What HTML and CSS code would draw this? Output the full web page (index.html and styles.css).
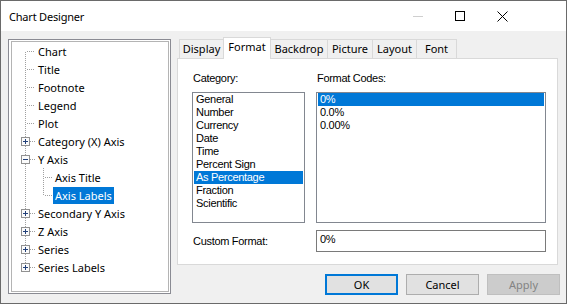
FILE: index.html
```html
<!DOCTYPE html>
<html>
<head>
<meta charset="utf-8">
<title>Chart Designer</title>
<link rel="stylesheet" href="styles.css">
</head>
<body>
<div class="window">
  <div class="titlebar">
    <span class="title">Chart Designer</span>
    <div class="controls">
      <span class="ctl"><svg width="10" height="1"><rect width="10" height="1" fill="#cfcfcf"/></svg></span>
      <span class="ctl"><svg width="10" height="10"><rect x="0.5" y="0.5" width="9" height="9" fill="none" stroke="#000"/></svg></span>
      <span class="ctl"><svg width="11" height="11"><path d="M0.5 0.5L10.5 10.5M10.5 0.5L0.5 10.5" stroke="#000" fill="none"/></svg></span>
    </div>
  </div>
  <div class="main">
    <div class="tree">
      <div class="tree-inner">
        <div class="row"><svg class="gut" width="24" height="18"><line x1="13.5" y1="10" x2="13.5" y2="18" class="dot"/><line x1="15" y1="9.5" x2="23" y2="9.5" class="dot"/></svg><span class="label">Chart</span></div>
        <div class="row"><svg class="gut" width="24" height="18"><line x1="13.5" y1="0" x2="13.5" y2="18" class="dot"/><line x1="15" y1="9.5" x2="23" y2="9.5" class="dot"/></svg><span class="label">Title</span></div>
        <div class="row"><svg class="gut" width="24" height="18"><line x1="13.5" y1="0" x2="13.5" y2="18" class="dot"/><line x1="15" y1="9.5" x2="23" y2="9.5" class="dot"/></svg><span class="label">Footnote</span></div>
        <div class="row"><svg class="gut" width="24" height="18"><line x1="13.5" y1="0" x2="13.5" y2="18" class="dot"/><line x1="15" y1="9.5" x2="23" y2="9.5" class="dot"/></svg><span class="label">Legend</span></div>
        <div class="row"><svg class="gut" width="24" height="18"><line x1="13.5" y1="0" x2="13.5" y2="18" class="dot"/><line x1="15" y1="9.5" x2="23" y2="9.5" class="dot"/></svg><span class="label">Plot</span></div>
        <div class="row"><svg class="gut" width="24" height="18"><line x1="13.5" y1="0" x2="13.5" y2="5" class="dot"/><line x1="13.5" y1="14" x2="13.5" y2="18" class="dot"/><line x1="18" y1="9.5" x2="23" y2="9.5" class="dot"/><rect x="9.5" y="5.5" width="8" height="8" class="box"/><path d="M11 9.5H16M13.5 7V12" class="sign"/></svg><span class="label">Category (X) Axis</span></div>
        <div class="row"><svg class="gut" width="24" height="18"><line x1="13.5" y1="0" x2="13.5" y2="5" class="dot"/><line x1="13.5" y1="14" x2="13.5" y2="18" class="dot"/><line x1="18" y1="9.5" x2="23" y2="9.5" class="dot"/><rect x="9.5" y="5.5" width="8" height="8" class="box"/><path d="M11 9.5H16" class="sign"/></svg><span class="label">Y Axis</span></div>
        <div class="row"><svg class="gut" width="41" height="18"><line x1="13.5" y1="0" x2="13.5" y2="18" class="dot"/><line x1="31.5" y1="0" x2="31.5" y2="18" class="dot"/><line x1="33" y1="9.5" x2="41" y2="9.5" class="dot"/></svg><span class="label">Axis Title</span></div>
        <div class="row"><svg class="gut" width="41" height="18"><line x1="13.5" y1="0" x2="13.5" y2="18" class="dot"/><line x1="31.5" y1="0" x2="31.5" y2="10" class="dot"/><line x1="33" y1="9.5" x2="41" y2="9.5" class="dot"/></svg><span class="label sel">Axis Labels</span></div>
        <div class="row"><svg class="gut" width="24" height="18"><line x1="13.5" y1="0" x2="13.5" y2="5" class="dot"/><line x1="13.5" y1="14" x2="13.5" y2="18" class="dot"/><line x1="18" y1="9.5" x2="23" y2="9.5" class="dot"/><rect x="9.5" y="5.5" width="8" height="8" class="box"/><path d="M11 9.5H16M13.5 7V12" class="sign"/></svg><span class="label">Secondary Y Axis</span></div>
        <div class="row"><svg class="gut" width="24" height="18"><line x1="13.5" y1="0" x2="13.5" y2="5" class="dot"/><line x1="13.5" y1="14" x2="13.5" y2="18" class="dot"/><line x1="18" y1="9.5" x2="23" y2="9.5" class="dot"/><rect x="9.5" y="5.5" width="8" height="8" class="box"/><path d="M11 9.5H16M13.5 7V12" class="sign"/></svg><span class="label">Z Axis</span></div>
        <div class="row"><svg class="gut" width="24" height="18"><line x1="13.5" y1="0" x2="13.5" y2="5" class="dot"/><line x1="13.5" y1="14" x2="13.5" y2="18" class="dot"/><line x1="18" y1="9.5" x2="23" y2="9.5" class="dot"/><rect x="9.5" y="5.5" width="8" height="8" class="box"/><path d="M11 9.5H16M13.5 7V12" class="sign"/></svg><span class="label">Series</span></div>
        <div class="row"><svg class="gut" width="24" height="18"><line x1="13.5" y1="0" x2="13.5" y2="5" class="dot"/><line x1="18" y1="9.5" x2="23" y2="9.5" class="dot"/><rect x="9.5" y="5.5" width="8" height="8" class="box"/><path d="M11 9.5H16M13.5 7V12" class="sign"/></svg><span class="label">Series Labels</span></div>
      </div>
    </div>
    <div class="right">
      <div class="tabs">
        <span class="tab w-display">Display</span>
        <span class="tab active w-format">Format</span>
        <span class="tab w-backdrop">Backdrop</span>
        <span class="tab w-picture">Picture</span>
        <span class="tab w-layout">Layout</span>
        <span class="tab last w-font">Font</span>
      </div>
      <div class="panel">
        <div class="lbl">Category:</div>
        <div class="lbl">Format Codes:</div>
        <div class="list">
          <div class="item">General</div>
          <div class="item">Number</div>
          <div class="item">Currency</div>
          <div class="item">Date</div>
          <div class="item">Time</div>
          <div class="item">Percent Sign</div>
          <div class="item sel">As Percentage</div>
          <div class="item">Fraction</div>
          <div class="item">Scientific</div>
        </div>
        <div class="list">
          <div class="item sel">0%</div>
          <div class="item">0.0%</div>
          <div class="item">0.00%</div>
        </div>
        <div class="lbl mid">Custom Format:</div>
        <div class="input">0%</div>
      </div>
      <div class="buttons">
        <span class="btn default">OK</span>
        <span class="btn">Cancel</span>
        <span class="btn disabled">Apply</span>
      </div>
    </div>
  </div>
</div>
</body>
</html>
```
FILE: styles.css
```css
* { box-sizing: border-box; }
html, body { margin: 0; padding: 0; background: #ffffff; }
body {
  font-family: "Noto Sans", "DejaVu Sans", sans-serif;
  font-size: 11px;
  color: #000;
}
.window {
  width: 567px;
  height: 304px;
  border: 1px solid #6a6a6a;
  background: #f0f0f0;
  display: flex;
  flex-direction: column;
}
.titlebar {
  height: 30px;
  flex: none;
  background: #ffffff;
  display: flex;
  align-items: center;
  padding-left: 8px;
}
.title { flex: 1; font-size: 11px; letter-spacing: -0.2px; }
.controls { display: flex; padding-right: 43px; }
.ctl {
  width: 42px;
  height: 30px;
  display: flex;
  align-items: center;
  justify-content: center;
}
.ctl svg { display: block; }
.main {
  flex: 1;
  display: flex;
  align-items: flex-start;
  padding: 6px 0 0 7px;
}
.tree {
  width: 163px;
  height: 255px;
  margin-top: 2px;
  border: 1px solid #8a8b93;
  padding: 1px 1px 1px 2px;
  background: #ffffff;
}
.tree-inner {
  height: 100%;
  border: 1px solid #b4b4b4;
  background: #ffffff;
}
.row {
  height: 18px;
  display: flex;
  align-items: center;
}
.gut { display: block; flex: none; shape-rendering: crispEdges; }
.dot { stroke: #a0a0a0; stroke-width: 1; stroke-dasharray: 1 1; }
.box { fill: #fbfbfb; stroke: #919191; }
.sign { stroke: #23417a; fill: none; }
.label {
  padding: 0 2px;
  height: 17px;
  line-height: 17px;
  white-space: nowrap;
}
.label.sel { background: #0078d7; color: #fff; }

.right {
  width: 383px;
  margin-left: 6px;
  display: flex;
  flex-direction: column;
}
.tabs {
  height: 21px;
  display: flex;
  align-items: flex-end;
  padding-left: 2px;
}
.tab {
  height: 19px;
  border: 1px solid #d9d9d9;
  border-right: none;
  border-bottom: none;
  background: #f0f0f0;
  text-align: center;
  line-height: 18px;
}
.tab.last { border-right: 1px solid #d9d9d9; }
.tab.active {
  height: 22px;
  margin-bottom: -1px;
  background: #ffffff;
  border-right: 1px solid #d9d9d9;
  line-height: 18px;
  position: relative;
  z-index: 1;
}
.tab.active + .tab { border-left: none; }
.w-display { width: 44px; }
.w-format { width: 48px; }
.w-backdrop { width: 56px; }
.w-picture { width: 45px; }
.w-layout { width: 44px; }
.w-font { width: 41px; }
.panel {
  width: 381px;
  height: 207px;
  border: 1px solid #d9d9d9;
  background: #ffffff;
  padding: 13px 0 0 14px;
  display: grid;
  grid-template-columns: 113px 230px;
  grid-template-rows: 13px 131px 22px;
  column-gap: 11px;
  row-gap: 7px;
  font-family: "Liberation Sans", Arial, sans-serif;
  font-size: 11px;
  letter-spacing: -0.3px;
}
.lbl { padding-left: 1px; line-height: 13px; white-space: nowrap; }
.lbl.mid { align-self: center; }
.list {
  border: 1px solid #828790;
  padding: 0 1px;
  background: #fff;
}
.item { height: 13px; line-height: 13px; padding-left: 2px; white-space: nowrap; }
.item.sel { background: #0078d7; color: #fff; }
.input {
  border: 1px solid #7a7a7a;
  padding: 2px 0 0 3px;
  line-height: 13px;
}
.buttons {
  margin-top: 9px;
  display: flex;
  justify-content: flex-end;
  gap: 8px;
}
.btn {
  width: 73px;
  height: 21px;
  border: 1px solid #adadad;
  background: #e1e1e1;
  display: flex;
  align-items: center;
  justify-content: center;
}
.btn.default { border: 2px solid #0078d7; }
.btn.disabled { background: #cccccc; border-color: #bfbfbf; color: #838383; }
```
